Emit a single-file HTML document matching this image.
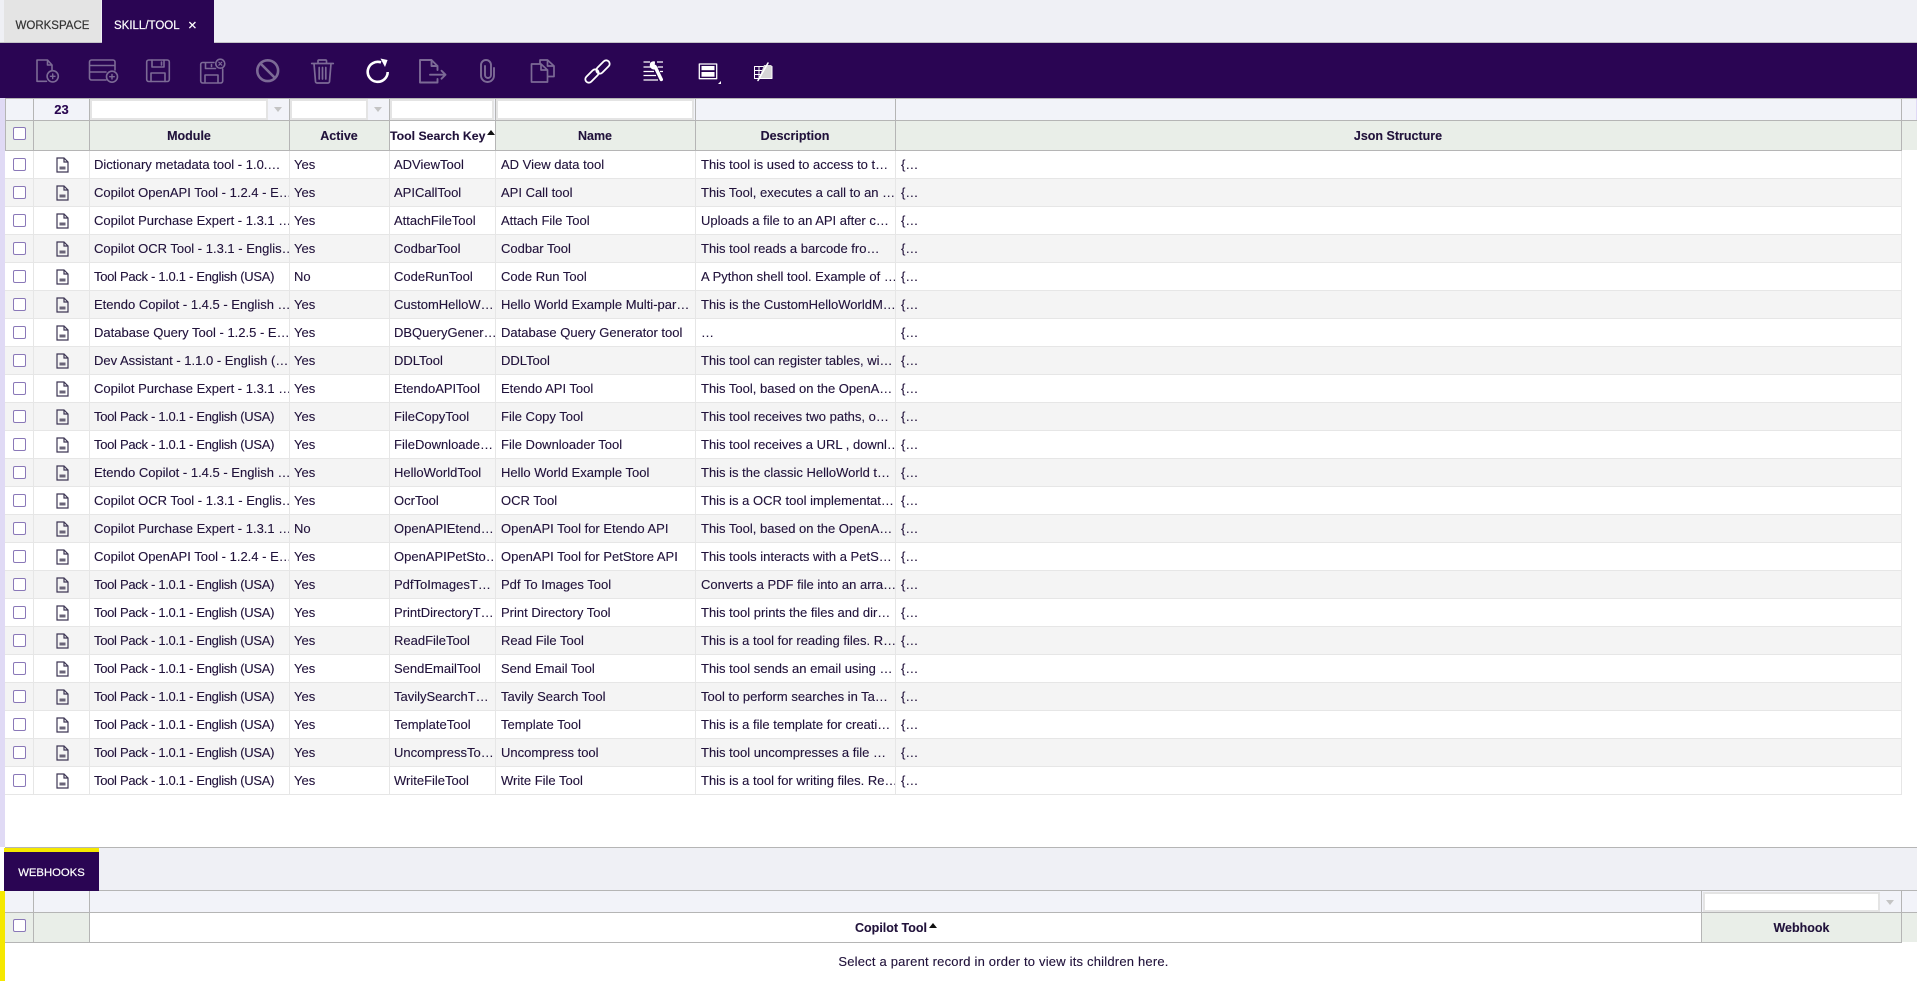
<!DOCTYPE html>
<html lang="en"><head><meta charset="utf-8"><title>Skill/Tool</title>
<style>
html,body{margin:0;padding:0;background:#fff}
body{position:relative;width:1917px;height:981px;overflow:hidden;font:13px/27px "Liberation Sans",Arial,sans-serif;color:#21123b;-webkit-text-stroke:.12px #21123b}
.a,.r,.r span,.h,.ln,.arr{position:absolute;display:block;box-sizing:border-box}
.tab{position:absolute;top:0;height:43px;line-height:52px;font-size:11.5px}
.ln{background:#b5b5b5}
.r{left:5px;width:1897px;height:28px;border-bottom:1px solid #e6e6e6;border-right:1px solid #e6e6e6;background:#fff}
.r:nth-child(even){background:#f4f4f4}
.r span{top:0;height:27px;white-space:nowrap;overflow:hidden;border-left:1px solid #e6e6e6;padding-left:5px}
.r span.c0{left:28px;width:56px;padding:0}
.r span.c1{left:84px;width:200px;padding-left:4px}
.r span.c1.tp{letter-spacing:-.3px}
.r span.c2{left:284px;width:100px;padding-left:4px}
.r span.c3{left:384px;width:106px;padding-left:4px}
.r span.c4{left:490px;width:200px}
.r span.c5{left:690px;width:200px}
.r span.c6{left:890px;width:1006px}
.cb{position:absolute;left:8px;top:7px;width:13px;height:13px;box-sizing:border-box;border:1px solid #8a78b8;border-radius:2px;background:#fff}
.r svg{position:absolute;left:51px;top:6px}
.h{top:121px;height:29px;background:#e9eee8;text-align:center;font-weight:bold;font-size:12.5px;line-height:30px;white-space:nowrap}
.f{position:absolute;background:#fff;border:2px solid #e4e4e4;box-sizing:border-box}
.arr{width:0;height:0;border-left:4.5px solid transparent;border-right:4.5px solid transparent;border-top:5px solid #c4c4c4}
</style></head><body>
<svg width="0" height="0" style="position:absolute"><defs>
<symbol id="doc" viewBox="0 0 13 16"><path d="M1 1H8L12 5V15H1Z M8 1V5H12" fill="none" stroke="#3d3654" stroke-width="1.2"/><rect x="3.5" y="9.5" width="6" height="3" fill="#6a6478"/></symbol>
</defs></svg>

<div class="a" style="left:0;top:0;width:1917px;height:43px;background:#eff0f5;border-bottom:1px solid #c4c4c8"></div>
<div class="tab" style="left:4px;width:97px;background:#e4e4e4;color:#333;-webkit-text-stroke:.2px #333;text-align:center;height:42px">WORKSPACE</div>
<div class="tab" style="left:102px;width:112px;background:#2a0553;color:#fff;-webkit-text-stroke:.2px #fff;padding-left:12px;box-sizing:border-box">SKILL/TOOL<span style="position:absolute;left:86px;font-size:15px">×</span></div>

<div class="a" style="left:0;top:43px;width:1917px;height:55px;background:#2a0553"></div>
<svg class="a" style="left:0;top:43px" width="1917" height="55" viewBox="0 43 1917 55" fill="none" stroke-linejoin="round" stroke-linecap="round">
<g stroke="#7c6a96" stroke-width="1.6">
<path d="M46.5 81.3H37V60H47.5L52 65V70M47.5 60V65H52"/><circle cx="52.7" cy="76.3" r="5.6"/><path d="M50.4 76.3h4.6M52.7 74v4.6" stroke-width="1.4"/>
<path d="M106 80H91.5a2 2 0 0 1-2-2V62a2 2 0 0 1 2-2H113a2 2 0 0 1 2 2V70M89.5 65.5H115M89.5 72H106"/><circle cx="112" cy="76.7" r="5.5"/><path d="M109.7 76.7h4.6M112 74.4v4.6" stroke-width="1.4"/>
<rect x="146.7" y="60" width="22.6" height="21.5" rx="2"/><path d="M152 60v7h12v-7M161.5 62v3M151 81.5V73h14v8.5"/>
<path d="M214 62.5H202.5a1.8 1.8 0 0 0-1.8 1.8V81a2 2 0 0 0 2 2H220.7a2 2 0 0 0 2-2V69M205.5 62.5v6h10M211.5 64.5v2M205 83V75h13v8"/><circle cx="220.3" cy="63.7" r="4.5"/><path d="M218.8 62.2l3 3M221.8 62.2l-3 3" stroke-width="1.1"/>
<circle cx="267.7" cy="70.7" r="10.4" stroke-width="2.6"/><path d="M260.5 63.5L275 78" stroke-width="2.6"/>
<path d="M311.7 63.5H333.3M318 63.3V61a1 1 0 0 1 1-1h6.5a1 1 0 0 1 1 1v2.3M314 63.5L315.5 81.5a1.5 1.5 0 0 0 1.5 1.5H328a1.5 1.5 0 0 0 1.5-1.5L331 63.5M319.2 67.5V79M322.5 67.5V79M325.8 67.5V79" stroke-width="1.7"/>
<path d="M437.5 70V66L431.5 60H420V82.5H437.5V79M431.5 60V66H437.5M430 74.7H445.5M441.5 70.7l4 4-4 4" stroke-width="1.9"/>
<path d="M494 68V75.5a6.5 6.5 0 0 1-13 0V65a5 5 0 0 1 10 0V75a3 3 0 0 1-6 0V66" stroke-width="1.9"/>
<path d="M540 63.7V60H547.5L554 66V76.5H548M547.5 60V66H554M531.5 64H541L547.5 70V82H531.5ZM541 64V70H547.5" stroke-width="1.7"/>
</g>
<path d="M381 62.4A10 10 0 1 0 387.7 72" stroke="#fff" stroke-width="2.6" stroke-linecap="butt"/><path d="M380.5 58.5L387.6 60L385 67Z" fill="#fff"/>
<g stroke="#fff" stroke-width="1.8"><rect x="584" y="72.5" width="16" height="7" rx="3.5" transform="rotate(-45 592 76)"/><rect x="595" y="63.5" width="16" height="7" rx="3.5" transform="rotate(-45 603 67)"/></g>
<g stroke="#fff" stroke-width="1.2" stroke-linecap="butt"><path d="M643.5 62H650M657 62H663M643.5 67H652M658 67H663M643.5 71.5H654M660 71.5H663M643.5 75.5H656M643.5 80H658"/></g>
<path d="M655 66.5L661.3 79.5" stroke="#fff" stroke-width="3.4"/><path d="M650.5 62.5a4.5 4.5 0 0 0 1.5 6.5a4.5 4.5 0 0 0 6-2L654.8 65.5L655 61.5a4.5 4.5 0 0 0-4.5 1Z" fill="#fff"/>
<rect x="699.3" y="64" width="17.4" height="14.7" stroke="#fff" stroke-width="1.3" stroke-linecap="butt"/><rect x="701.5" y="66" width="13" height="4.2" fill="#fff"/><rect x="701.5" y="72" width="13" height="4.7" fill="#fff"/><path d="M721 81V84H718Z" fill="#fff"/>
<path d="M754.5 66.5H772V78.5H754.5ZM754.5 70.5H764M754.5 74.5H762M759 66.5V78.5" stroke="#fff" stroke-width="1" stroke-linecap="butt"/><path d="M764 65H771.5V78H759Z" fill="#d6d6d6"/><path d="M758 80.5L768 63" stroke="#fff" stroke-width="1.5"/>
</svg>

<!-- left strips -->
<div class="a" style="left:0;top:98px;width:5px;height:749px;background:#e0daf5"></div>
<div class="a" style="left:1916px;top:99px;width:1px;height:30px;background:#e0daf5"></div>
<div class="a" style="left:0;top:891px;width:5px;height:90px;background:#f5e800"></div>

<!-- top filter row -->
<div class="a" style="left:5px;top:99px;width:1911px;height:21px;background:#f2f3f9"></div>
<div class="f" style="left:90px;top:99px;width:178px;height:21px"></div>
<div class="arr" style="left:274px;top:107px"></div>
<div class="f" style="left:290px;top:99px;width:78px;height:21px"></div>
<div class="arr" style="left:374px;top:107px"></div>
<div class="f" style="left:390px;top:99px;width:104px;height:21px"></div>
<div class="f" style="left:496px;top:99px;width:198px;height:21px"></div>
<div class="a" style="left:34px;top:98px;width:55px;height:22px;line-height:23px;text-align:center;font-weight:bold;color:#2a0553">23</div>

<!-- top header -->
<div class="a" style="left:5px;top:121px;width:1912px;height:29px;background:#e9eee8"></div>
<div class="h" style="left:89px;width:200px">Module</div>
<div class="h" style="left:289px;width:100px">Active</div>
<div class="h" style="left:390px;width:105px;background:#fff;text-align:left;font-size:12.3px">Tool Search Key<span class="a" style="left:97px;top:9px;width:0;height:0;border-left:4px solid transparent;border-right:4px solid transparent;border-bottom:5px solid #111"></span></div>
<div class="h" style="left:495px;width:200px">Name</div>
<div class="h" style="left:695px;width:200px">Description</div>
<div class="h" style="left:895px;width:1006px">Json Structure</div>
<div class="cb" style="left:13px;top:127px"></div>

<div class="ln" style="left:5px;top:98px;width:1912px;height:1px"></div>
<div class="ln" style="left:5px;top:120px;width:1912px;height:1px"></div>
<div class="ln" style="left:5px;top:150px;width:1897px;height:1px"></div>
<div class="ln" style="left:5px;top:98px;width:1px;height:53px"></div>
<div class="ln" style="left:33px;top:98px;width:1px;height:53px"></div>
<div class="ln" style="left:89px;top:98px;width:1px;height:53px"></div>
<div class="ln" style="left:289px;top:98px;width:1px;height:53px"></div>
<div class="ln" style="left:389px;top:98px;width:1px;height:53px"></div>
<div class="ln" style="left:495px;top:98px;width:1px;height:53px"></div>
<div class="ln" style="left:695px;top:98px;width:1px;height:53px"></div>
<div class="ln" style="left:895px;top:98px;width:1px;height:53px"></div>
<div class="ln" style="left:1901px;top:98px;width:1px;height:53px"></div>

<!-- rows -->
<div class="a" style="left:0;top:151px;width:1917px;height:644px">
<div class="r" style="top:0"><div class="cb"></div><span class="c0"></span><svg width="13" height="16"><use href="#doc"/></svg><span class="c1">Dictionary metadata tool - 1.0.…</span><span class="c2">Yes</span><span class="c3">ADViewTool</span><span class="c4">AD View data tool</span><span class="c5">This tool is used to access to t…</span><span class="c6">{…</span></div>
<div class="r" style="top:28px"><div class="cb"></div><span class="c0"></span><svg width="13" height="16"><use href="#doc"/></svg><span class="c1">Copilot OpenAPI Tool - 1.2.4 - E…</span><span class="c2">Yes</span><span class="c3">APICallTool</span><span class="c4">API Call tool</span><span class="c5">This Tool, executes a call to an …</span><span class="c6">{…</span></div>
<div class="r" style="top:56px"><div class="cb"></div><span class="c0"></span><svg width="13" height="16"><use href="#doc"/></svg><span class="c1">Copilot Purchase Expert - 1.3.1 …</span><span class="c2">Yes</span><span class="c3">AttachFileTool</span><span class="c4">Attach File Tool</span><span class="c5">Uploads a file to an API after c…</span><span class="c6">{…</span></div>
<div class="r" style="top:84px"><div class="cb"></div><span class="c0"></span><svg width="13" height="16"><use href="#doc"/></svg><span class="c1">Copilot OCR Tool - 1.3.1 - Englis…</span><span class="c2">Yes</span><span class="c3">CodbarTool</span><span class="c4">Codbar Tool</span><span class="c5">This tool reads a barcode fro…</span><span class="c6">{…</span></div>
<div class="r" style="top:112px"><div class="cb"></div><span class="c0"></span><svg width="13" height="16"><use href="#doc"/></svg><span class="c1 tp">Tool Pack - 1.0.1 - English (USA)</span><span class="c2">No</span><span class="c3">CodeRunTool</span><span class="c4">Code Run Tool</span><span class="c5">A Python shell tool. Example of …</span><span class="c6">{…</span></div>
<div class="r" style="top:140px"><div class="cb"></div><span class="c0"></span><svg width="13" height="16"><use href="#doc"/></svg><span class="c1">Etendo Copilot - 1.4.5 - English …</span><span class="c2">Yes</span><span class="c3">CustomHelloW…</span><span class="c4">Hello World Example Multi-par…</span><span class="c5">This is the CustomHelloWorldM…</span><span class="c6">{…</span></div>
<div class="r" style="top:168px"><div class="cb"></div><span class="c0"></span><svg width="13" height="16"><use href="#doc"/></svg><span class="c1">Database Query Tool - 1.2.5 - E…</span><span class="c2">Yes</span><span class="c3">DBQueryGener…</span><span class="c4">Database Query Generator tool</span><span class="c5">…</span><span class="c6">{…</span></div>
<div class="r" style="top:196px"><div class="cb"></div><span class="c0"></span><svg width="13" height="16"><use href="#doc"/></svg><span class="c1">Dev Assistant - 1.1.0 - English (…</span><span class="c2">Yes</span><span class="c3">DDLTool</span><span class="c4">DDLTool</span><span class="c5">This tool can register tables, wi…</span><span class="c6">{…</span></div>
<div class="r" style="top:224px"><div class="cb"></div><span class="c0"></span><svg width="13" height="16"><use href="#doc"/></svg><span class="c1">Copilot Purchase Expert - 1.3.1 …</span><span class="c2">Yes</span><span class="c3">EtendoAPITool</span><span class="c4">Etendo API Tool</span><span class="c5">This Tool, based on the OpenA…</span><span class="c6">{…</span></div>
<div class="r" style="top:252px"><div class="cb"></div><span class="c0"></span><svg width="13" height="16"><use href="#doc"/></svg><span class="c1 tp">Tool Pack - 1.0.1 - English (USA)</span><span class="c2">Yes</span><span class="c3">FileCopyTool</span><span class="c4">File Copy Tool</span><span class="c5">This tool receives two paths, o…</span><span class="c6">{…</span></div>
<div class="r" style="top:280px"><div class="cb"></div><span class="c0"></span><svg width="13" height="16"><use href="#doc"/></svg><span class="c1 tp">Tool Pack - 1.0.1 - English (USA)</span><span class="c2">Yes</span><span class="c3">FileDownloade…</span><span class="c4">File Downloader Tool</span><span class="c5">This tool receives a URL , downl…</span><span class="c6">{…</span></div>
<div class="r" style="top:308px"><div class="cb"></div><span class="c0"></span><svg width="13" height="16"><use href="#doc"/></svg><span class="c1">Etendo Copilot - 1.4.5 - English …</span><span class="c2">Yes</span><span class="c3">HelloWorldTool</span><span class="c4">Hello World Example Tool</span><span class="c5">This is the classic HelloWorld t…</span><span class="c6">{…</span></div>
<div class="r" style="top:336px"><div class="cb"></div><span class="c0"></span><svg width="13" height="16"><use href="#doc"/></svg><span class="c1">Copilot OCR Tool - 1.3.1 - Englis…</span><span class="c2">Yes</span><span class="c3">OcrTool</span><span class="c4">OCR Tool</span><span class="c5">This is a OCR tool implementat…</span><span class="c6">{…</span></div>
<div class="r" style="top:364px"><div class="cb"></div><span class="c0"></span><svg width="13" height="16"><use href="#doc"/></svg><span class="c1">Copilot Purchase Expert - 1.3.1 …</span><span class="c2">No</span><span class="c3">OpenAPIEtend…</span><span class="c4">OpenAPI Tool for Etendo API</span><span class="c5">This Tool, based on the OpenA…</span><span class="c6">{…</span></div>
<div class="r" style="top:392px"><div class="cb"></div><span class="c0"></span><svg width="13" height="16"><use href="#doc"/></svg><span class="c1">Copilot OpenAPI Tool - 1.2.4 - E…</span><span class="c2">Yes</span><span class="c3">OpenAPIPetSto…</span><span class="c4">OpenAPI Tool for PetStore API</span><span class="c5">This tools interacts with a PetS…</span><span class="c6">{…</span></div>
<div class="r" style="top:420px"><div class="cb"></div><span class="c0"></span><svg width="13" height="16"><use href="#doc"/></svg><span class="c1 tp">Tool Pack - 1.0.1 - English (USA)</span><span class="c2">Yes</span><span class="c3">PdfToImagesT…</span><span class="c4">Pdf To Images Tool</span><span class="c5">Converts a PDF file into an arra…</span><span class="c6">{…</span></div>
<div class="r" style="top:448px"><div class="cb"></div><span class="c0"></span><svg width="13" height="16"><use href="#doc"/></svg><span class="c1 tp">Tool Pack - 1.0.1 - English (USA)</span><span class="c2">Yes</span><span class="c3">PrintDirectoryT…</span><span class="c4">Print Directory Tool</span><span class="c5">This tool prints the files and dir…</span><span class="c6">{…</span></div>
<div class="r" style="top:476px"><div class="cb"></div><span class="c0"></span><svg width="13" height="16"><use href="#doc"/></svg><span class="c1 tp">Tool Pack - 1.0.1 - English (USA)</span><span class="c2">Yes</span><span class="c3">ReadFileTool</span><span class="c4">Read File Tool</span><span class="c5">This is a tool for reading files. R…</span><span class="c6">{…</span></div>
<div class="r" style="top:504px"><div class="cb"></div><span class="c0"></span><svg width="13" height="16"><use href="#doc"/></svg><span class="c1 tp">Tool Pack - 1.0.1 - English (USA)</span><span class="c2">Yes</span><span class="c3">SendEmailTool</span><span class="c4">Send Email Tool</span><span class="c5">This tool sends an email using …</span><span class="c6">{…</span></div>
<div class="r" style="top:532px"><div class="cb"></div><span class="c0"></span><svg width="13" height="16"><use href="#doc"/></svg><span class="c1 tp">Tool Pack - 1.0.1 - English (USA)</span><span class="c2">Yes</span><span class="c3">TavilySearchT…</span><span class="c4">Tavily Search Tool</span><span class="c5">Tool to perform searches in Ta…</span><span class="c6">{…</span></div>
<div class="r" style="top:560px"><div class="cb"></div><span class="c0"></span><svg width="13" height="16"><use href="#doc"/></svg><span class="c1 tp">Tool Pack - 1.0.1 - English (USA)</span><span class="c2">Yes</span><span class="c3">TemplateTool</span><span class="c4">Template Tool</span><span class="c5">This is a file template for creati…</span><span class="c6">{…</span></div>
<div class="r" style="top:588px"><div class="cb"></div><span class="c0"></span><svg width="13" height="16"><use href="#doc"/></svg><span class="c1 tp">Tool Pack - 1.0.1 - English (USA)</span><span class="c2">Yes</span><span class="c3">UncompressTo…</span><span class="c4">Uncompress tool</span><span class="c5">This tool uncompresses a file …</span><span class="c6">{…</span></div>
<div class="r" style="top:616px"><div class="cb"></div><span class="c0"></span><svg width="13" height="16"><use href="#doc"/></svg><span class="c1 tp">Tool Pack - 1.0.1 - English (USA)</span><span class="c2">Yes</span><span class="c3">WriteFileTool</span><span class="c4">Write File Tool</span><span class="c5">This is a tool for writing files. Re…</span><span class="c6">{…</span></div>
</div>

<!-- lower section -->
<div class="a" style="left:5px;top:848px;width:1912px;height:42px;background:#eff0f5"></div>
<div class="ln" style="left:5px;top:847px;width:1912px;height:1px"></div>
<div class="a" style="left:4px;top:848px;width:95px;height:43px;background:#2a0553;border-top:4px solid #f5e800;color:#fff;-webkit-text-stroke:.2px #fff;font-size:11.3px;text-align:center;line-height:42px;box-sizing:border-box">WEBHOOKS</div>
<div class="ln" style="left:99px;top:890px;width:1818px;height:1px"></div>

<div class="a" style="left:5px;top:891px;width:1912px;height:21px;background:#f2f3f9"></div>
<div class="f" style="left:1703px;top:892px;width:177px;height:20px"></div>
<div class="arr" style="left:1886px;top:900px"></div>
<div class="a" style="left:5px;top:913px;width:84px;height:29px;background:#e9eee8"></div>
<div class="cb" style="left:13px;top:919px"></div>
<div class="a" style="left:90px;top:913px;width:1611px;height:29px;line-height:30px;font-weight:bold;font-size:12.5px;white-space:nowrap;background:#fff"><span class="a" style="left:761px;width:80px;text-align:center">Copilot Tool</span><span class="a" style="left:839px;top:10px;width:0;height:0;border-left:4px solid transparent;border-right:4px solid transparent;border-bottom:5px solid #111"></span></div>
<div class="h" style="left:1702px;top:913px;width:199px">Webhook</div>
<div class="a" style="left:1902px;top:913px;width:15px;height:29px;background:#e9eee8"></div>

<div class="ln" style="left:5px;top:912px;width:1912px;height:1px"></div>
<div class="ln" style="left:5px;top:942px;width:1897px;height:1px"></div>
<div class="ln" style="left:33px;top:891px;width:1px;height:52px"></div>
<div class="ln" style="left:89px;top:891px;width:1px;height:52px"></div>
<div class="ln" style="left:1701px;top:891px;width:1px;height:52px"></div>
<div class="ln" style="left:1901px;top:891px;width:1px;height:52px"></div>

<div class="a" style="left:90px;top:948px;width:1827px;height:27px;text-align:center;letter-spacing:.2px">Select a parent record in order to view its children here.</div>
</body></html>
